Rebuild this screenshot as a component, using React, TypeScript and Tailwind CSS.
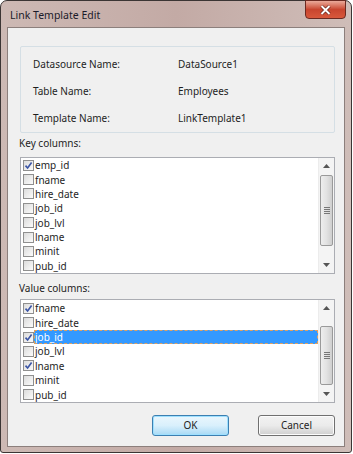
import React from 'react';

const font = { fontFamily: '"Noto Sans", "Open Sans", sans-serif' };

type Item = { name: string; checked?: boolean; selected?: boolean };

const keyItems: Item[] = [
  { name: 'emp_id', checked: true },
  { name: 'fname' },
  { name: 'hire_date' },
  { name: 'job_id' },
  { name: 'job_lvl' },
  { name: 'lname' },
  { name: 'minit' },
  { name: 'pub_id' },
];

const valueItems: Item[] = [
  { name: 'fname', checked: true },
  { name: 'hire_date' },
  { name: 'job_id', checked: true, selected: true },
  { name: 'job_lvl' },
  { name: 'lname', checked: true },
  { name: 'minit' },
  { name: 'pub_id' },
];

function CheckBox({ checked }: { checked?: boolean }) {
  return (
    <div className="w-[11px] h-[11px] shrink-0 border border-[#8f8f8f] bg-gradient-to-br from-[#dcdcdc] to-[#fbfbfb] flex items-center justify-center">
      {checked && (
        <svg width="9" height="9" viewBox="0 0 9 9">
          <path d="M1.5 4.6 L3.6 7 L7.6 1.5" fill="none" stroke="#3b55a6" strokeWidth="1.6" />
        </svg>
      )}
    </div>
  );
}

function ScrollBar({ thumbTop, thumbHeight }: { thumbTop: number; thumbHeight: number }) {
  return (
    <div className="w-[16px] h-full bg-[#f4f4f4] border-l border-[#ececec] flex flex-col relative">
      <div className="h-[16px] flex items-center justify-center">
        <svg width="7" height="4" viewBox="0 0 7 4"><path d="M0 4 L3.5 0 L7 4 Z" fill="#555" /></svg>
      </div>
      <div className="flex-1" />
      <div className="h-[16px] flex items-center justify-center">
        <svg width="7" height="4" viewBox="0 0 7 4"><path d="M0 0 L3.5 4 L7 0 Z" fill="#555" /></svg>
      </div>
      <div
        className="absolute left-[1px] right-[1px] rounded-[2px] border border-[#9a9a9a] bg-gradient-to-r from-[#eeeeee] via-[#e2e2e2] to-[#cfcfcf] flex items-center justify-center"
        style={{ top: thumbTop, height: thumbHeight }}
      >
        <div className="flex flex-col gap-[1px]">
          <div className="w-[6px] h-[1px] bg-[#777]" />
          <div className="w-[6px] h-[1px] bg-[#777]" />
          <div className="w-[6px] h-[1px] bg-[#777]" />
          <div className="w-[6px] h-[1px] bg-[#777]" />
        </div>
      </div>
    </div>
  );
}

function CheckList({ items, height, thumbTop, thumbHeight, padTop }: { items: Item[]; height: number; thumbTop: number; thumbHeight: number; padTop: number }) {
  return (
    <div className="ml-[12px] w-[315px] border border-[#abadb3] bg-white flex" style={{ height }}>
      <div className="flex-1 flex flex-col pl-[2px]" style={{ paddingTop: padTop }}>
        {items.map((it) => (
          <div key={it.name} className="h-[14.5px] flex items-center">
            <CheckBox checked={it.checked} />
            <div
              className={
                it.selected
                  ? 'flex-1 h-full flex items-center pl-[1px] bg-[#3399ff] text-white outline outline-1 outline-dashed outline-[#e0a060] -outline-offset-1'
                  : 'flex-1 h-full flex items-center pl-[1px] text-[#1e1e1e]'
              }
            >
              <span className="text-[10px] leading-none">{it.name}</span>
            </div>
          </div>
        ))}
      </div>
      <ScrollBar thumbTop={thumbTop} thumbHeight={thumbHeight} />
    </div>
  );
}

export default function App() {
  return (
    <div className="w-[353px] h-[454px] bg-white" style={font}>
      <div className="w-[352px] h-[453px] rounded-t-[7px] rounded-b-[3px] border border-[#3b3534] bg-gradient-to-r from-[#cdb9b4] via-[#c3aaa5] to-[#cfbdb8] flex flex-col">
        {/* title bar */}
        <div className="h-[26px] flex items-start relative">
          <span className="ml-[9px] mt-[7px] text-[10.5px] text-[#1b1b2a]">Link Template Edit</span>
          <div className="absolute top-[-1px] right-[5px] w-[41px] h-[19px] rounded-b-[4px] border border-[#6b2a22] bg-gradient-to-b from-[#e9a99a] via-[#c8452f] to-[#d8583c] flex items-center justify-center">
            <svg width="11" height="10" viewBox="0 0 11 10">
              <path d="M1.5 1 L9.5 9 M9.5 1 L1.5 9" stroke="#5a1a12" strokeWidth="3.2" />
              <path d="M1.5 1 L9.5 9 M9.5 1 L1.5 9" stroke="#ffffff" strokeWidth="2" />
            </svg>
          </div>
        </div>
        {/* client area */}
        <div className="mx-[6px] mb-[5px] flex-1 border border-[#8c7f7c] bg-[#f0f0f0] flex flex-col text-[10px] text-[#1e1e1e]">
          <div className="ml-[12px] mt-[18px] w-[315px] h-[87px] border border-[#d5dfe5] rounded-[2px] flex flex-col pt-[4px]">
            {[
              ['Datasource Name:', 'DataSource1'],
              ['Table Name:', 'Employees'],
              ['Template Name:', 'LinkTemplate1'],
            ].map(([l, v]) => (
              <div key={l} className="h-[27px] flex items-center">
                <span className="ml-[12px] w-[145px]">{l}</span>
                <span>{v}</span>
              </div>
            ))}
          </div>
          <div className="ml-[11px] mt-[2px] mb-[6px] h-[16px] flex items-center">Key columns:</div>
          <CheckList items={keyItems} height={117} thumbTop={17} thumbHeight={71} padTop={0} />
          <div className="ml-[11px] mt-[6px] mb-[3px] h-[16px] flex items-center">Value columns:</div>
          <CheckList items={valueItems} height={104} thumbTop={26} thumbHeight={59} padTop={1} />
          <div className="mt-[12px] flex gap-[29px] pl-[144px]">
            <button className="w-[77px] h-[21px] rounded-[3px] border border-[#3c7fb1] bg-gradient-to-b from-[#eaf6fd] via-[#d9f0fc] to-[#a7d9f5] text-[10px] text-[#1e1e1e] shadow-[inset_0_0_0_1px_#9ee0ff]">
              OK
            </button>
            <button className="w-[77px] h-[21px] rounded-[3px] border border-[#707070] bg-gradient-to-b from-[#f2f2f2] via-[#ebebeb] to-[#cfcfcf] text-[10px] text-[#1e1e1e] shadow-[inset_0_0_0_1px_#fcfcfc]">
              Cancel
            </button>
          </div>
        </div>
      </div>
    </div>
  );
}
